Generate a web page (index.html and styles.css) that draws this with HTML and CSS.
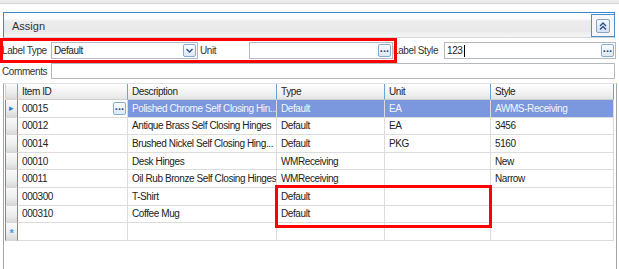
FILE: index.html
```html
<!DOCTYPE html>
<html lang="en">
<head>
    <meta charset="UTF-8">
    <title>Assign</title>
    <link rel="stylesheet" href="styles.css">
</head>
<body>
    <div class="topbar"></div>

    <!-- Assign panel header -->
    <div class="panel-head">
        <span class="panel-title">Assign</span>
        <div class="collapse-btn">
            <span class="collapse-icon">
                <svg width="10" height="10" viewBox="0 0 10 10"><path d="M2 5 L5 2 L8 5 M2 8.5 L5 5.5 L8 8.5" fill="none" stroke="#2b4f86" stroke-width="1.4"/></svg>
            </span>
        </div>
    </div>

    <!-- form fields -->
    <div class="form">
        <div class="form-row">
            <label class="lbl">Label Type</label>
            <div class="field w-type">
                <span class="val">Default</span>
                <span class="mini-btn">
                    <svg width="9" height="9" viewBox="0 0 9 9"><path d="M1.5 3 L4.5 6 L7.5 3" fill="none" stroke="#2b4f86" stroke-width="1.3"/></svg>
                </span>
            </div>
            <label class="lbl">Unit</label>
            <div class="field w-unit">
                <span class="val"></span>
                <span class="mini-btn dots">&middot;&middot;&middot;</span>
            </div>
            <label class="lbl lbl-style">Label Style</label>
            <div class="field w-style">
                <span class="val">123<span class="caret"></span></span>
                <span class="mini-btn dots">&middot;&middot;&middot;</span>
            </div>
        </div>
        <div class="form-row row2">
            <label class="lbl">Comments</label>
            <div class="field w-comments"></div>
        </div>
    </div>

    <!-- grid -->
    <div class="grid">
        <div class="grid-row grid-head">
            <div class="rh"></div>
            <div class="c c-id">Item ID</div>
            <div class="c c-desc">Description</div>
            <div class="c c-type">Type</div>
            <div class="c c-unit">Unit</div>
            <div class="c c-style">Style</div>
        </div>
        <div class="grid-row selected">
            <div class="rh"><span class="arrow">&#9656;</span></div>
            <div class="c c-id current">00015<span class="mini-btn dots cell-btn">&middot;&middot;&middot;</span></div>
            <div class="c c-desc">Polished Chrome Self Closing Hin...</div>
            <div class="c c-type">Default</div>
            <div class="c c-unit">EA</div>
            <div class="c c-style">AWMS-Receiving</div>
        </div>
        <div class="grid-row">
            <div class="rh"></div>
            <div class="c c-id">00012</div>
            <div class="c c-desc">Antique Brass Self Closing Hinges</div>
            <div class="c c-type">Default</div>
            <div class="c c-unit">EA</div>
            <div class="c c-style">3456</div>
        </div>
        <div class="grid-row">
            <div class="rh"></div>
            <div class="c c-id">00014</div>
            <div class="c c-desc">Brushed Nickel Self Closing Hing...</div>
            <div class="c c-type">Default</div>
            <div class="c c-unit">PKG</div>
            <div class="c c-style">5160</div>
        </div>
        <div class="grid-row">
            <div class="rh"></div>
            <div class="c c-id">00010</div>
            <div class="c c-desc">Desk Hinges</div>
            <div class="c c-type">WMReceiving</div>
            <div class="c c-unit"></div>
            <div class="c c-style">New</div>
        </div>
        <div class="grid-row">
            <div class="rh"></div>
            <div class="c c-id">00011</div>
            <div class="c c-desc">Oil Rub Bronze Self Closing Hinges</div>
            <div class="c c-type">WMReceiving</div>
            <div class="c c-unit"></div>
            <div class="c c-style">Narrow</div>
        </div>
        <div class="grid-row">
            <div class="rh"></div>
            <div class="c c-id">000300</div>
            <div class="c c-desc">T-Shirt</div>
            <div class="c c-type">Default</div>
            <div class="c c-unit"></div>
            <div class="c c-style"></div>
        </div>
        <div class="grid-row">
            <div class="rh"></div>
            <div class="c c-id">000310</div>
            <div class="c c-desc">Coffee Mug</div>
            <div class="c c-type">Default</div>
            <div class="c c-unit"></div>
            <div class="c c-style"></div>
        </div>
        <div class="grid-row">
            <div class="rh"><span class="star">*</span></div>
            <div class="c c-id"></div>
            <div class="c c-desc"></div>
            <div class="c c-type"></div>
            <div class="c c-unit"></div>
            <div class="c c-style"></div>
        </div>
    </div>

    <!-- red highlight marks -->
    <div class="mark mark-top"></div>
    <div class="mark mark-grid"></div>
</body>
</html>
```

FILE: styles.css
```css
body {
    margin: 0;
    position: relative;
    height: 269px;
    overflow: hidden;
    background: #fff;
    font-family: "Liberation Sans", Arial, sans-serif;
    font-size: 10px;
    letter-spacing: -0.4px;
    color: #222;
}

.topbar {
    height: 3px;
    background: #ececec;
    border-bottom: 1px solid #d6d6d6;
}

/* panel header */
.panel-head {
    margin: 8px 4px 0 3px;
    height: 24px;
    border: 1px solid #3a86cf;
    border-bottom: 1px solid #d4d4d4;
    background: linear-gradient(#ffffff 0%, #fbfbfb 25%, #ececec 35%, #e9e9e9 75%, #f6f6f6 100%);
    display: flex;
    align-items: center;
    justify-content: space-between;
}

.panel-title {
    padding-left: 8px;
    padding-top: 2px;
    font-size: 11px;
    letter-spacing: 0;
    color: #333;
}

.collapse-btn {
    width: 24px;
    height: 23px;
    margin-right: -1px;
    margin-top: 1px;
    border: 1px solid #4b8fd3;
    box-sizing: border-box;
    background: #f7f7f7;
    display: flex;
    align-items: center;
    justify-content: center;
}

.collapse-icon {
    width: 12px;
    height: 12px;
    border: 1px solid #8aa2c4;
    border-radius: 2px;
    background: linear-gradient(#f4f8fd, #d5e3f3);
    display: flex;
    align-items: center;
    justify-content: center;
}

/* form */
.form {
    padding-top: 4px;
}

.form-row {
    display: flex;
    align-items: center;
    height: 17px;
}

.row2 {
    margin-top: 4px;
    height: 16px;
}

.lbl {
    width: 49px;
    padding-left: 2px;
    color: #333;
    white-space: nowrap;
}

.lbl-style {
    width: 51px;
    padding-left: 0;
}

.field {
    height: 100%;
    box-sizing: border-box;
    border: 1px solid #b5b8bf;
    background: #fff;
    display: flex;
    align-items: center;
    justify-content: space-between;
    padding-left: 2px;
}

.w-type { width: 147px; }
.w-unit { width: 144px; }
.w-style { width: 172px; }
.w-comments { width: 564px; }

.val {
    display: flex;
    align-items: center;
}

.caret {
    display: inline-block;
    width: 1px;
    height: 12px;
    background: #000;
    margin-left: 1px;
}

.mini-btn {
    width: 13px;
    height: 13px;
    box-sizing: border-box;
    margin-right: 1px;
    border: 1px solid #86acd8;
    border-radius: 2px;
    background: linear-gradient(#fbfdff, #dbe8f6);
    display: flex;
    align-items: center;
    justify-content: center;
}

.dots {
    font-size: 11px;
    font-weight: bold;
    letter-spacing: -0.5px;
    color: #24477a;
    line-height: 10px;
    padding-top: 1px;
}

/* grid */
.grid {
    margin: 4px 0 0 3px;
    width: 611px;
    height: 185px;
    border-left: 1px solid #a6a6a6;
    border-right: 1px solid #a6a6a6;
    border-top: 1px solid #e2e2e2;
    padding-left: 1px;
}

.grid-row {
    display: flex;
    height: 17.6px;
    box-sizing: border-box;
}

.grid-head {
    height: 16px;
}

.rh {
    width: 13px;
    box-sizing: border-box;
    border-left: 1px solid #4f95d2;
    border-right: 1px solid #4f95d2;
    border-bottom: 1px solid #d6d6d6;
    background: linear-gradient(#fafafa, #ececec 60%, #d9d9d9);
    display: flex;
    align-items: center;
    justify-content: center;
}

.arrow {
    color: #2f7dc8;
    font-size: 9px;
}

.star {
    color: #4aa0e6;
    font-size: 11px;
    font-weight: bold;
    padding-top: 3px;
}

.c {
    box-sizing: border-box;
    border-right: 1px solid #dcdcdc;
    border-bottom: 1px solid #dcdcdc;
    padding-left: 4px;
    display: flex;
    align-items: center;
    white-space: nowrap;
    overflow: hidden;
}

.c-id { width: 110px; }
.c-desc { width: 149px; }
.c-type { width: 108px; }
.c-unit { width: 106px; }
.c-style { width: 123px; }

.grid-head .c {
    background: linear-gradient(#ffffff, #f4f4f4 50%, #e6e6e6);
    border-right: 1px solid #6ba3d8;
    border-bottom: 1px solid #cfcfcf;
    color: #222;
}

.grid-head .rh {
    border-left-color: #d0d0d0;
    border-right-color: #6ba3d8;
}

.selected .c {
    background: #7b97de;
    color: #f4f6fc;
}

.selected .c.current {
    background: #fff;
    color: #222;
    justify-content: space-between;
}

.cell-btn {
    margin-right: 1px;
}

/* red highlight marks */
.mark {
    position: absolute;
    border: 3px solid #f00;
    box-sizing: border-box;
}

.mark-top {
    left: 0;
    top: 38px;
    width: 397px;
    height: 25px;
}

.mark-grid {
    left: 275px;
    top: 185px;
    width: 217px;
    height: 43px;
}
```
